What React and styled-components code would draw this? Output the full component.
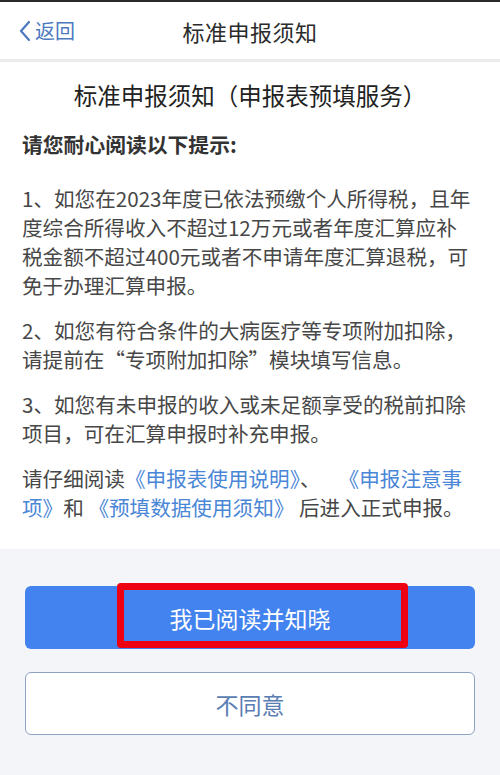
import React from 'react'
import styled, { createGlobalStyle } from 'styled-components'

const GlobalStyle = createGlobalStyle`
  html, body {
    margin: 0;
    padding: 0;
    background: #f4f5f9;
  }
  body {
    font-family: "Noto Sans CJK SC", sans-serif;
  }
`

const Page = styled.div`
  width: 500px;
  min-height: 775px;
  background: #f4f5f9;
  border-top: 2px solid #2a2a2a;
  box-sizing: border-box;
`

const NavBar = styled.header`
  position: relative;
  height: 57px;
  display: flex;
  align-items: center;
  justify-content: center;
  background: #ffffff;
  border-bottom: 3px solid #ebebeb;
`

const BackLink = styled.a`
  position: absolute;
  left: 18px;
  top: 0;
  bottom: 0;
  display: flex;
  align-items: center;
  gap: 3px;
  color: #4d79c0;
  font-size: 20px;
  text-decoration: none;
`

const NavTitle = styled.h1`
  margin: 0;
  font-size: 22px;
  font-weight: 400;
  color: #2b2b2b;
  letter-spacing: 0.5px;
`

const Content = styled.section`
  background: #ffffff;
  padding: 15px 8px 27px 22px;
`

const Heading = styled.h2`
  margin: 0 0 16px;
  text-align: center;
  font-size: 23.5px;
  font-weight: 400;
  color: #222222;
  line-height: 36px;
  padding-right: 14px;
`

const Lead = styled.p`
  margin: 0 0 25px;
  font-size: 20.8px;
  font-weight: 700;
  color: #333333;
  line-height: 30px;
`

const Para = styled.p`
  margin: 0 0 16px;
  font-size: 20.6px;
  line-height: 29px;
  color: #474747;
  white-space: nowrap;

  &:last-child {
    margin-bottom: 0;
  }
`

const Link = styled.a`
  color: #4a86d6;
  text-decoration: none;
`

const Gap = styled.span`
  display: inline-block;
  width: ${p => p.w}px;
`

const Actions = styled.div`
  display: flex;
  flex-direction: column;
  gap: 23px;
  padding: 37px 25px 0;
`

const Button = styled.button`
  position: relative;
  height: 63px;
  width: 100%;
  border-radius: 6px;
  font-family: "Noto Sans CJK SC", sans-serif;
  font-size: 23px;
  cursor: pointer;
  background: ${p => (p.primary ? '#4383ef' : '#ffffff')};
  color: ${p => (p.primary ? '#ffffff' : '#5a7db3')};
  border: ${p => (p.primary ? 'none' : '1px solid #8ea2c2')};
`

const Highlight = styled.span`
  position: absolute;
  left: 92px;
  top: -3px;
  width: 291px;
  height: 65px;
  border: 7px solid #ee0012;
  border-radius: 4px;
  box-sizing: border-box;
  pointer-events: none;
`

const Chevron = () => (
  <svg width="14" height="22" viewBox="0 0 14 22" fill="none">
    <path d="M11 2 L3 11 L11 20" stroke="#4d79c0" strokeWidth="2.2" strokeLinecap="round" strokeLinejoin="round" />
  </svg>
)

export default function App() {
  return (
    <Page>
      <GlobalStyle />
      <NavBar>
        <BackLink href="#">
          <Chevron />
          返回
        </BackLink>
        <NavTitle>标准申报须知</NavTitle>
      </NavBar>

      <Content>
        <Heading>标准申报须知（申报表预填服务）</Heading>
        <Lead>请您耐心阅读以下提示:</Lead>
        <Para>
          1、如您在2023年度已依法预缴个人所得税，且年<br />
          度综合所得收入不超过12万元或者年度汇算应补<br />
          税金额不超过400元或者不申请年度汇算退税，可<br />
          免于办理汇算申报。
        </Para>
        <Para>
          2、如您有符合条件的大病医疗等专项附加扣除，<br />
          请提前在“专项附加扣除”模块填写信息。
        </Para>
        <Para>
          3、如您有未申报的收入或未足额享受的税前扣除<br />
          项目，可在汇算申报时补充申报。
        </Para>
        <Para>
          请仔细阅读<Link href="#">《申报表使用说明》</Link>、<Gap w={18} />
          <Link href="#">《申报注意事</Link><br />
          <Link href="#">项》</Link>和 <Link href="#">《预填数据使用须知》</Link> 后进入正式申报。
        </Para>
      </Content>

      <Actions>
        <Button primary>
          我已阅读并知晓
          <Highlight />
        </Button>
        <Button>不同意</Button>
      </Actions>
    </Page>
  )
}
